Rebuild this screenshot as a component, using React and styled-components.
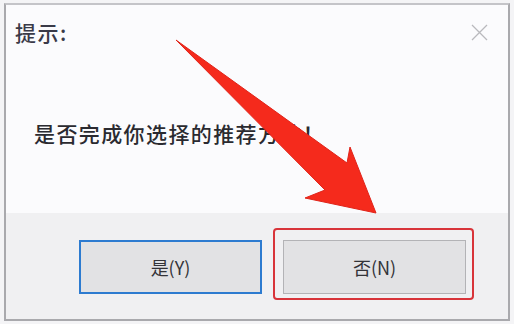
import styled, { createGlobalStyle } from "styled-components";

const GlobalStyle = createGlobalStyle`
  html, body {
    margin: 0;
    padding: 0;
    background: #f4f4f6;
  }
  body {
    font-family: "Noto Sans CJK SC", "Liberation Sans", sans-serif;
  }
`;

const Page = styled.div`
  position: relative;
  width: 514px;
  height: 324px;
  padding: 3px 4px;
  box-sizing: border-box;
`;

const Window = styled.div`
  display: flex;
  flex-direction: column;
  width: 506px;
  height: 318px;
  box-sizing: border-box;
  border: 2px solid #a9a9ad;
  border-top-color: #c4c4c8;
  background: #fbfbfd;
`;

const TitleBar = styled.div`
  display: flex;
  justify-content: space-between;
  align-items: center;
  height: 54px;
  padding: 0 20px 0 9px;
`;

const Title = styled.span`
  font-size: 21px;
  font-weight: 500;
  color: #3a3a48;
  letter-spacing: 1.5px;
`;

const CloseIcon = styled.svg`
  width: 17px;
  height: 17px;
  stroke: #b9b9bd;
  stroke-width: 1.3;
`;

const Body = styled.div`
  flex: 1;
  padding: 59px 0 0 28px;
`;

const Message = styled.p`
  margin: 0;
  font-size: 21px;
  font-weight: 500;
  color: #2a2a30;
  letter-spacing: 1.4px;
`;

const Footer = styled.div`
  display: flex;
  align-items: flex-start;
  gap: 21px;
  height: 106px;
  padding: 27px 0 0 73px;
  box-sizing: border-box;
  background: #f0f0f2;
`;

const ButtonSlot = styled.div`
  position: relative;
`;

const Button = styled.button`
  display: flex;
  align-items: center;
  justify-content: center;
  width: 183px;
  height: 54px;
  box-sizing: border-box;
  background: #e2e2e4;
  border: ${(p) => (p.$default ? "2px solid #2d7bd0" : "1px solid #b3b3b6")};
  font-family: inherit;
  font-size: 18px;
  color: #333338;
  padding: 0;
`;

const Highlight = styled.div`
  position: absolute;
  top: -12px;
  left: -10px;
  right: -8px;
  bottom: -6px;
  border: 2px solid #d8343a;
  border-radius: 4px;
  pointer-events: none;
`;

const Arrow = styled.svg`
  position: absolute;
  left: 0;
  top: 0;
  width: 514px;
  height: 324px;
  pointer-events: none;
`;

export default function App() {
  return (
    <Page>
      <GlobalStyle />
      <Window>
        <TitleBar>
          <Title>提示:</Title>
          <CloseIcon viewBox="0 0 17 17" fill="none">
            <path d="M1 1 L16 16 M16 1 L1 16" />
          </CloseIcon>
        </TitleBar>
        <Body>
          <Message>是否完成你选择的推荐方法！</Message>
        </Body>
        <Footer>
          <ButtonSlot>
            <Button $default>是(Y)</Button>
          </ButtonSlot>
          <ButtonSlot>
            <Button>否(N)</Button>
            <Highlight />
          </ButtonSlot>
        </Footer>
      </Window>
      <Arrow viewBox="0 0 514 324">
        <polygon
          points="176,40 347,163 350,147 376,213 305,198 325,190"
          fill="#f52a1c"
          stroke="#e0241a"
          strokeWidth="1"
          strokeLinejoin="round"
        />
      </Arrow>
    </Page>
  );
}
